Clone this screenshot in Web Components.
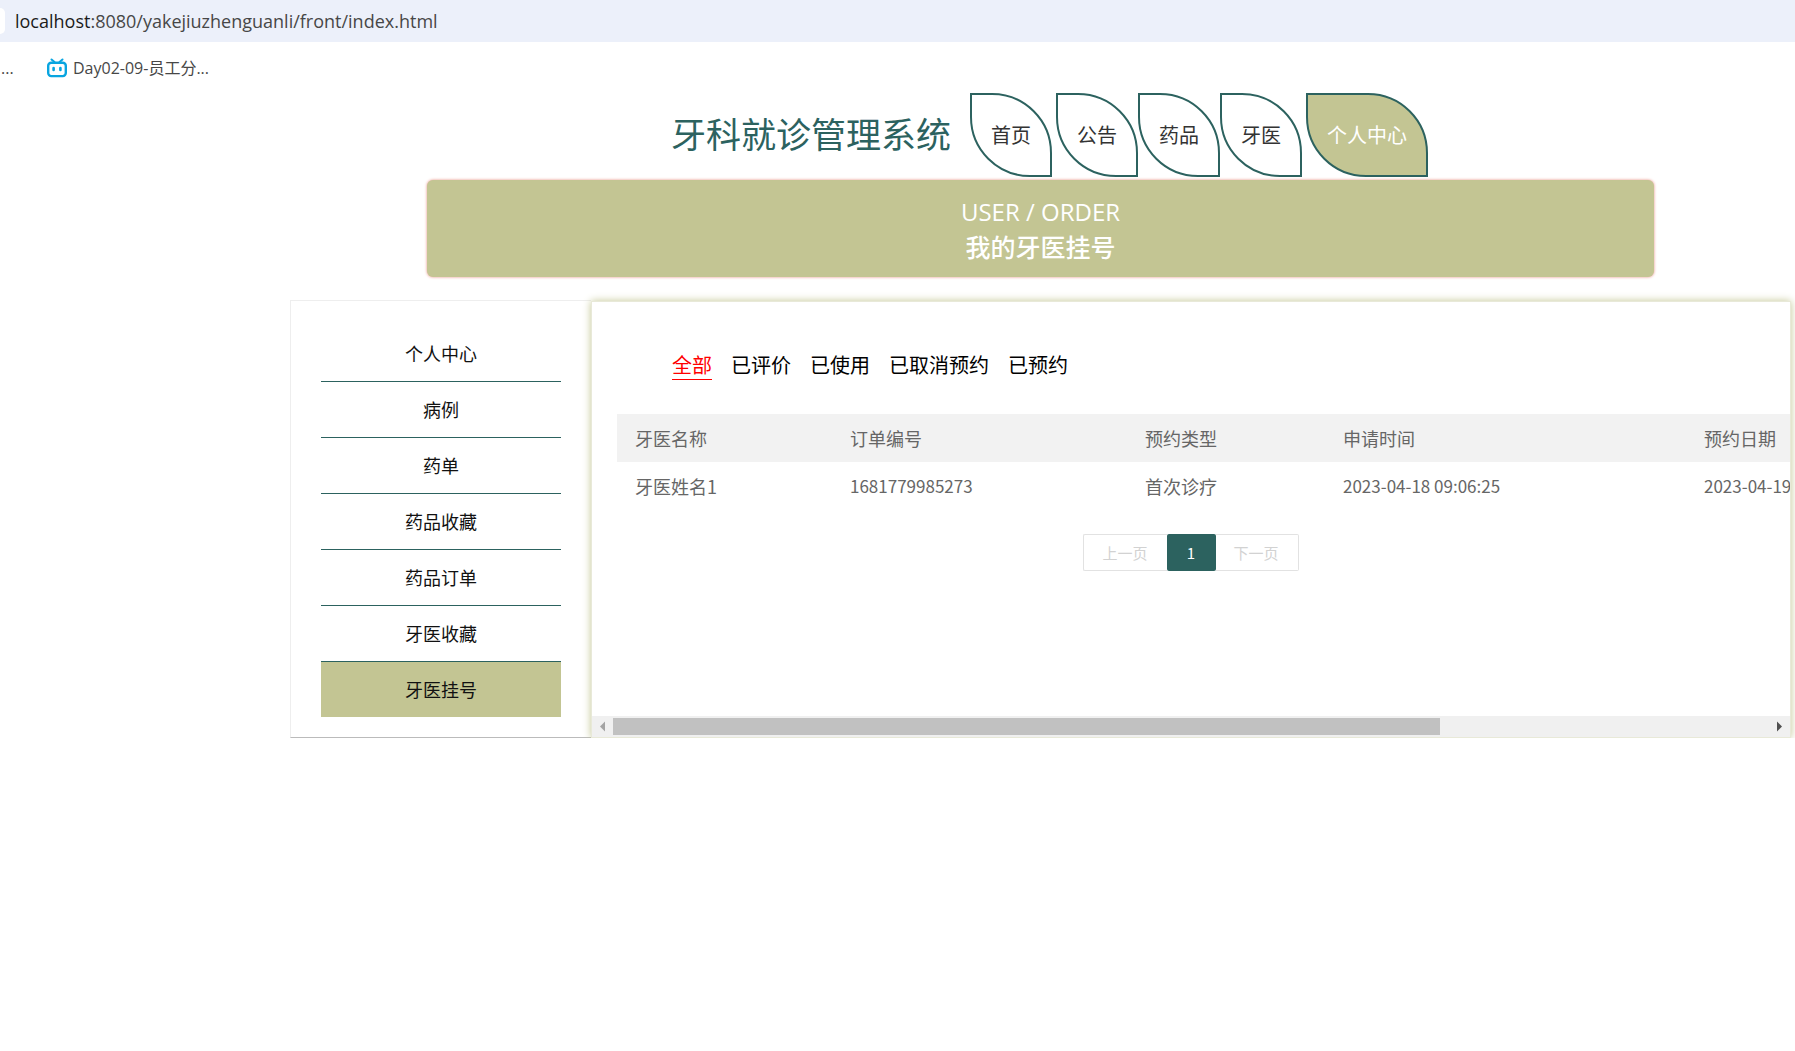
<!DOCTYPE html>
<html lang="zh-CN">
<head>
<meta charset="utf-8">
<title>牙科就诊管理系统</title>
<style>
  body {
    margin: 0;
    background: #fff;
    color: #333;
    font-family: "Noto Sans CJK SC", sans-serif;
    --green: #2c625f;
    --khaki: #c3c593;
    --latin: "Open Sans", "Noto Sans CJK SC", sans-serif;
  }
</style>
</head>
<body>
<dental-page>
  <browser-bar slot="browser" host="localhost" path=":8080/yakejiuzhenguanli/front/index.html"></browser-bar>
  <site-header slot="header" name="牙科就诊管理系统">
    <nav-leaf class="spaced">首页</nav-leaf>
    <nav-leaf>公告</nav-leaf>
    <nav-leaf>药品</nav-leaf>
    <nav-leaf class="spaced">牙医</nav-leaf>
    <nav-leaf active>个人中心</nav-leaf>
  </site-header>
  <page-banner slot="banner"><span slot="en">USER / ORDER</span>我的牙医挂号</page-banner>
  <side-menu slot="side">
    <side-item>个人中心</side-item>
    <side-item>病例</side-item>
    <side-item>药单</side-item>
    <side-item>药品收藏</side-item>
    <side-item>药品订单</side-item>
    <side-item>牙医收藏</side-item>
    <side-item active>牙医挂号</side-item>
  </side-menu>
  <order-panel>
    <status-tab slot="tabs" active>全部</status-tab>
    <status-tab slot="tabs">已评价</status-tab>
    <status-tab slot="tabs">已使用</status-tab>
    <status-tab slot="tabs">已取消预约</status-tab>
    <status-tab slot="tabs">已预约</status-tab>
    <order-table></order-table>
    <page-turner slot="pager"></page-turner>
    <scroll-track slot="scroll"></scroll-track>
  </order-panel>
</dental-page>
<script>
  const define = (name, html, setup) => customElements.define(name, class extends HTMLElement {
    constructor() {
      super();
      this.attachShadow({ mode: "open" }).innerHTML = html;
    }
    connectedCallback() {
      if (setup) setup(this, this.shadowRoot);
    }
  });

  define("dental-page", `
    <style>
      :host { display: block; }
      .site { margin: 0 4px 0 290px; }
      .columns { display: flex; align-items: stretch; margin-top: 23px; }
      slot[name=side]::slotted(*) { flex: none; }
      .columns slot:not([name])::slotted(*) { flex: 1; min-width: 0; }
    </style>
    <slot name="browser"></slot>
    <div class="site">
      <slot name="header"></slot>
      <slot name="banner"></slot>
      <main class="columns"><slot name="side"></slot><slot></slot></main>
    </div>`);

  define("browser-bar", `
    <style>
      :host { display: block; font-family: var(--latin); }
      .address { display: flex; align-items: center; height: 42px; background: #ecf0fa; overflow: hidden; }
      .knob { width: 5px; height: 26px; background: #fff; border-radius: 0 13px 13px 0; margin-right: 10px; }
      .url { font-size: 18px; line-height: 24px; color: #474747; white-space: nowrap; }
      .url b { font-weight: 400; color: #1b1b1b; }
      .marks { display: flex; align-items: center; height: 51px; font-size: 16px; line-height: 20px; color: #474747; }
      .dots { width: 45px; padding-left: 1px; box-sizing: border-box; }
      a { display: flex; align-items: center; gap: 6px; color: inherit; text-decoration: none; margin-left: 2px; }
    </style>
    <div class="address"><span class="knob"></span><span class="url"><b></b><span id="path"></span></span></div>
    <div class="marks">
      <span class="dots">...</span>
      <a href="#"><svg width="20" height="20" viewBox="0 0 20 20" fill="none" stroke="#08a5e0" stroke-linecap="round"><path d="M4.5 1.5l3 2.6M15.5 1.5l-3 2.6" stroke-width="2"/><rect x="1.2" y="4.7" width="17.6" height="13.4" rx="3" stroke-width="2.4"/><path d="M6.6 10v2M13.4 10v2" stroke-width="2.6"/></svg><span>Day02-09-员工分...</span></a>
    </div>`, (el, root) => {
    root.querySelector("b").textContent = el.getAttribute("host");
    root.getElementById("path").textContent = el.getAttribute("path");
  });

  define("site-header", `
    <style>
      :host { display: block; }
      header { display: flex; justify-content: center; align-items: center; padding-left: 18px; }
      h1 { margin: 0 19px 0 0; padding-bottom: 4px; font-size: 35px; line-height: 44px; font-weight: 400; color: var(--green); }
      nav { display: flex; }
      ::slotted(.spaced) { margin-right: 4px; }
    </style>
    <header><h1></h1><nav><slot></slot></nav></header>`, (el, root) => {
    root.querySelector("h1").textContent = el.getAttribute("name");
  });

  define("nav-leaf", `
    <style>
      :host { display: block; }
      a { display: block; box-sizing: border-box; padding: 0 19px; border: 2px solid var(--green); border-radius: 0 60px 0 60px;
          font-size: 20px; line-height: 80px; color: #333; text-decoration: none; white-space: nowrap; }
      :host([active]) a { background: var(--khaki); color: #fff; }
    </style>
    <a href="#"><slot></slot></a>`);

  define("page-banner", `
    <style>
      :host { display: block; margin: 3px 137px 0; padding: 14px 0 13px; background: var(--khaki); border-radius: 6px;
              box-shadow: 0 0 3px #e88a7c; color: #fff; text-align: center; font-size: 25px; line-height: 35px; }
      p, h2 { margin: 0; font-weight: 400; }
      p { font-family: var(--latin); font-size: 24px; }
      h2 { font-size: 25px; font-weight: 500; }
    </style>
    <p><slot name="en"></slot></p><h2><slot></slot></h2>`);

  define("side-menu", `
    <style>
      :host { display: block; box-sizing: border-box; width: 301px; padding: 25px 30px 20px;
              border: 1px solid #eee; border-right: 0; border-bottom-color: #bbb; }
    </style>
    <nav><slot></slot></nav>`);

  define("side-item", `
    <style>
      :host { display: block; border-bottom: 1px solid var(--green); }
      :host([active]) { border-bottom: 0; background: var(--khaki); }
      a { display: block; font-size: 18px; line-height: 55px; text-align: center; color: #111; text-decoration: none; }
    </style>
    <a href="#"><slot></slot></a>`);

  define("order-panel", `
    <style>
      :host { display: flex; flex-direction: column; margin-top: 1px; border: 1px solid #e8e9d8; background: #fff;
              box-shadow: 0 0 8px var(--khaki); box-sizing: border-box; overflow: hidden; }
      .tabs { display: flex; gap: 19px; padding: 48px 80px 0; }
      .table { margin: 34px 0 0 25px; overflow: hidden; }
      .pager { display: flex; justify-content: center; margin-top: 24px; flex: 1; align-items: flex-start; }
    </style>
    <div class="tabs"><slot name="tabs"></slot></div>
    <div class="table"><slot></slot></div>
    <div class="pager"><slot name="pager"></slot></div>
    <slot name="scroll"></slot>`);

  define("status-tab", `
    <style>
      :host { display: block; }
      a { display: block; font-size: 20px; line-height: 29px; color: #000; text-decoration: none; border-bottom: 1px solid transparent; }
      :host([active]) a { color: red; border-color: red; }
    </style>
    <a href="#"><slot></slot></a>`);

  define("order-table", `
    <style>
      :host { display: block; }
      table { width: 1620px; table-layout: fixed; border-collapse: collapse; color: #666; }
      th, td { height: 48px; padding: 0 18px; text-align: left; font-weight: 400; font-size: 18px; line-height: 24px; white-space: nowrap; }
      td.num { font-size: 17px; }
      thead { background: #f2f2f2; }
    </style>
    <table>
      <colgroup><col style="width:215px"><col style="width:295px"><col style="width:198px"><col style="width:361px"><col></colgroup>
      <thead><tr><th>牙医名称</th><th>订单编号</th><th>预约类型</th><th>申请时间</th><th>预约日期</th></tr></thead>
      <tbody><tr><td>牙医姓名1</td><td class="num">1681779985273</td><td>首次诊疗</td><td class="num">2023-04-18 09:06:25</td><td class="num">2023-04-19</td></tr></tbody>
    </table>`);

  define("page-turner", `
    <style>
      :host { display: flex; }
      button { font: 15px/35px "Noto Sans CJK SC", sans-serif; height: 37px; margin: 0; padding: 0 19px 0 18px; border: 1px solid #e2e2e2;
               background: #fff; color: #d2d2d2; }
      .prev { border-right: 0; border-radius: 2px 0 0 2px; }
      .next { border-left: 0; border-radius: 0 2px 2px 0; }
      .now { width: 49px; padding: 0; border: 0; border-radius: 2px; background: var(--green); color: #fff; }
    </style>
    <button class="prev" disabled>上一页</button><button class="now">1</button><button class="next" disabled>下一页</button>`);

  define("scroll-track", `
    <style>
      :host { display: flex; align-items: center; height: 21px; background: #f0f0f0; }
      svg { flex: none; width: 21px; height: 21px; }
      .run { flex: 1; }
      .thumb { width: 71.5%; height: 17px; background: #c1c1c1; }
    </style>
    <svg viewBox="0 0 21 21"><path d="M13 5.5v10L8 10.5z" fill="#a3a3a3"/></svg>
    <div class="run"><div class="thumb"></div></div>
    <svg viewBox="0 0 21 21"><path d="M8 5.5v10l5-5z" fill="#505050"/></svg>`);
</script>
</body>
</html>
